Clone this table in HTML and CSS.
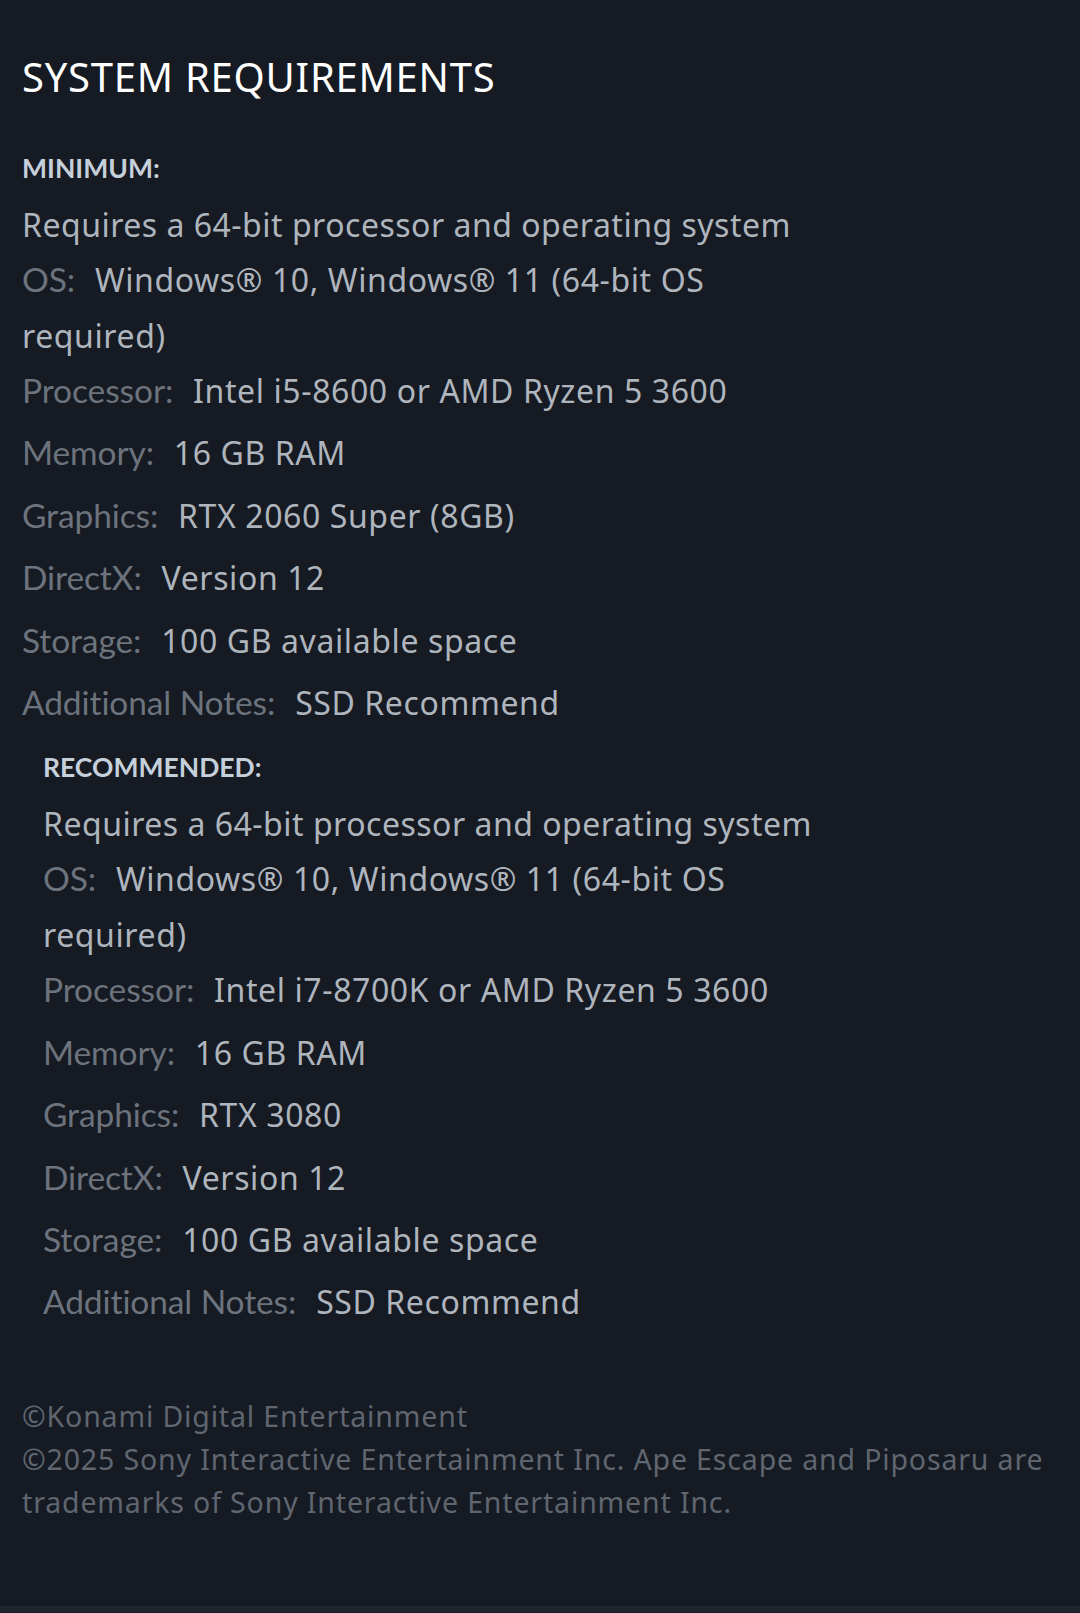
FILE: index.html
```html
<!DOCTYPE html>
<html lang="en">
<head>
<meta charset="utf-8">
<title>System Requirements</title>
<link rel="stylesheet" href="styles.css">
</head>
<body>
<div class="page">
  <h2 class="title">SYSTEM REQUIREMENTS</h2>
  <div class="sysreq">
    <div class="col">
      <div class="head">MINIMUM:</div>
      <ul class="reqs">
        <li class="tight">Requires a 64-bit processor and operating system</li>
        <li class="tight"><span class="lbl">OS:</span> <span class="val">Windows® 10, Windows® 11 (64-bit OS</span> <span class="val">required)</span></li>
        <li><span class="lbl">Processor:</span> <span class="val">Intel i5-8600 or AMD Ryzen 5 3600</span></li>
        <li><span class="lbl">Memory:</span> <span class="val">16 GB RAM</span></li>
        <li><span class="lbl">Graphics:</span> <span class="val">RTX 2060 Super (8GB)</span></li>
        <li><span class="lbl">DirectX:</span> <span class="val">Version 12</span></li>
        <li><span class="lbl">Storage:</span> <span class="val">100 GB available space</span></li>
        <li><span class="lbl">Additional Notes:</span> <span class="val">SSD Recommend</span></li>
      </ul>
    </div>
    <div class="col rec">
      <div class="head">RECOMMENDED:</div>
      <ul class="reqs">
        <li class="tight">Requires a 64-bit processor and operating system</li>
        <li class="tight"><span class="lbl">OS:</span> <span class="val">Windows® 10, Windows® 11 (64-bit OS</span> <span class="val">required)</span></li>
        <li><span class="lbl">Processor:</span> <span class="val">Intel i7-8700K or AMD Ryzen 5 3600</span></li>
        <li><span class="lbl">Memory:</span> <span class="val">16 GB RAM</span></li>
        <li><span class="lbl">Graphics:</span> <span class="val">RTX 3080</span></li>
        <li><span class="lbl">DirectX:</span> <span class="val">Version 12</span></li>
        <li><span class="lbl">Storage:</span> <span class="val">100 GB available space</span></li>
        <li><span class="lbl">Additional Notes:</span> <span class="val">SSD Recommend</span></li>
      </ul>
    </div>
  </div>
  <div class="legal">
    <p>©Konami Digital Entertainment</p>
    <p>©2025 Sony Interactive Entertainment Inc. Ape Escape and Piposaru are trademarks of Sony Interactive Entertainment Inc.</p>
  </div>
</div>
<div class="bottom-bar"></div>
</body>
</html>
```

FILE: styles.css
```css
html, body {
  margin: 0;
  padding: 0;
  background: #151a23;
}
body {
  font-family: "Noto Sans", "DejaVu Sans", sans-serif;
  color: #afb5bd;
}
.page {
  padding: 53px 22px 82px 22px;
}
.title {
  margin: 0;
  font-family: "Noto Sans", sans-serif;
  font-weight: 400;
  font-size: 40px;
  line-height: 48px;
  color: #ffffff;
  letter-spacing: 0.75px;
}
.sysreq {
  margin-top: 47px;
}
.col {
  width: 800px;
}
.col.rec {
  margin-top: 10px;
  padding-left: 21px;
}
.head {
  font-family: "Lato", sans-serif;
  font-weight: 700;
  font-size: 26.5px;
  line-height: 40px;
  color: #c6d0da;
  letter-spacing: 0;
}
.reqs {
  list-style: none;
  margin: 8.5px 0 0 0;
  padding: 0;
}
.reqs li {
  font-size: 32px;
  letter-spacing: 0.5px;
  line-height: 56px;
  padding-bottom: 6.4px;
}
.reqs li.tight {
  line-height: 55.5px;
  padding-bottom: 0;
}
.lbl {
  font-family: "Lato", sans-serif;
  font-size: 33.5px;
  line-height: 1;
  letter-spacing: -0.1px;
  color: #6c737c;
  margin-right: 11px;
}
.val {
  letter-spacing: 0.6px;
}
.legal {
  margin-top: 58px;
  font-size: 28.5px;
  letter-spacing: 0.85px;
  line-height: 43px;
  color: #60666f;
}
.legal p {
  margin: 0;
}
.bottom-bar {
  height: 6px;
  background: #1f252e;
}
```
